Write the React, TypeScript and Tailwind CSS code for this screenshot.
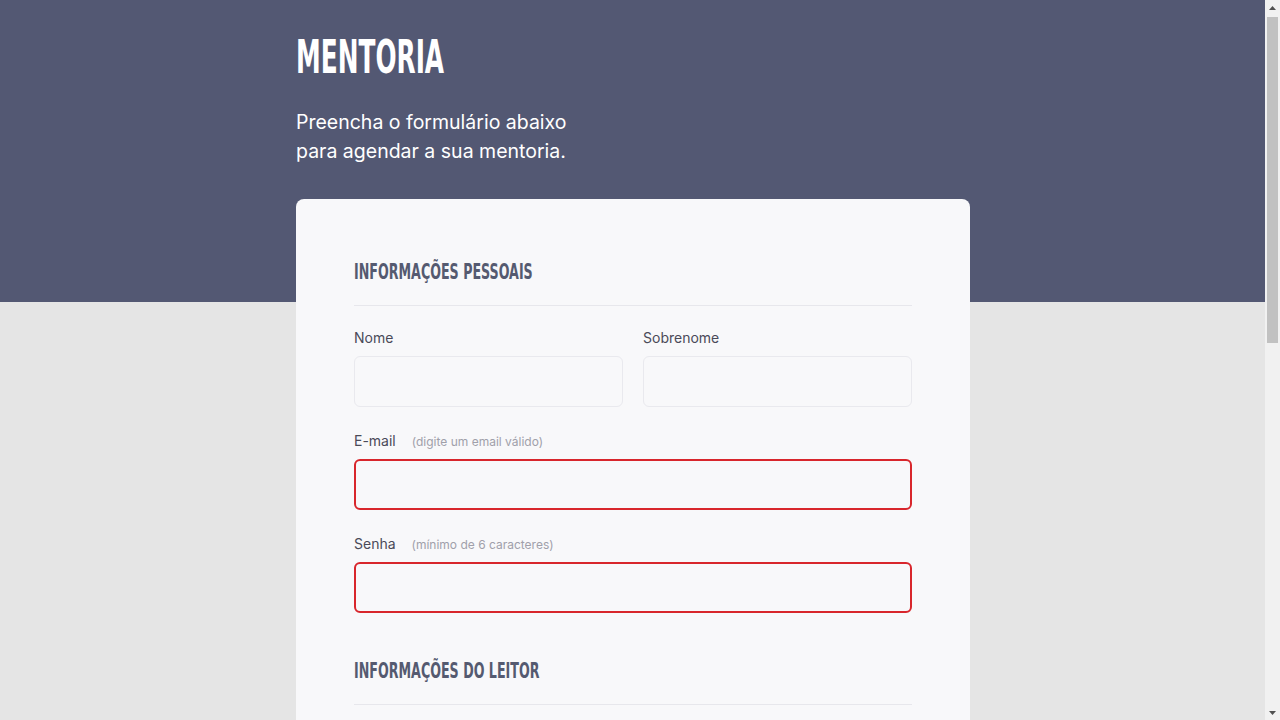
import React from "react";

const condensed = { fontFamily: '"Liberation Sans Narrow","DejaVu Sans Condensed","Liberation Sans",sans-serif' };
const body = { fontFamily: 'Inter,"Open Sans",sans-serif' };

function SectionTitle({ children }: { children: React.ReactNode }) {
  return (
    <div className="border-b border-[#e7e7ec] pb-[18px]">
      <h2
        style={condensed}
        className="inline-block origin-left scale-x-[0.64] text-[22px] font-bold uppercase leading-[30px] text-[#555a70] whitespace-nowrap"
      >
        {children}
      </h2>
    </div>
  );
}

function Field({ label, hint, error }: { label: string; hint?: string; error?: boolean }) {
  return (
    <div className="flex flex-col">
      <div className="flex items-baseline gap-[16px] h-[20px]">
        <span className="text-[14px] text-[#4a4a58]">{label}</span>
        {hint && <span className="text-[12px] text-[#a0a0aa]">{hint}</span>}
      </div>
      <div
        className={
          "mt-[9px] h-[51px] rounded-[6px] bg-[#f8f8fa] " +
          (error ? "border-2 border-[#d8262c]" : "border border-[#e9e9ee]")
        }
      />
    </div>
  );
}

function FakeScrollbar() {
  return (
    <div className="fixed right-0 top-0 z-10 flex h-screen w-[15px] flex-col bg-[#f1f1f1]">
      <div className="flex h-[15px] items-center justify-center">
        <svg width="7" height="4" viewBox="0 0 7 4"><path d="M0 4 L3.5 0 L7 4 Z" fill="#505050" /></svg>
      </div>
      <div className="mx-[2px] mt-[2px] h-[326px] bg-[#c1c1c1]" />
      <div className="flex-1" />
      <div className="flex h-[15px] items-center justify-center">
        <svg width="7" height="4" viewBox="0 0 7 4"><path d="M0 0 L7 0 L3.5 4 Z" fill="#505050" /></svg>
      </div>
    </div>
  );
}

export default function App() {
  return (
    <div style={body} className="min-h-screen bg-[#e5e5e5]">
      <FakeScrollbar />
      <div className="mr-[15px]">
        <div className="h-[302px] bg-[#535873]">
          <div className="mx-auto w-[675px] pt-[31px] pl-[1px]">
            <h1
              style={condensed}
              className="inline-block origin-left scale-x-[0.6] text-[46px] font-bold uppercase leading-[52px] text-white"
            >
              Mentoria
            </h1>
            <p className="mt-[25px] text-[19.5px] leading-[29px] text-white">
              Preencha o formulário abaixo
              <br />
              para agendar a sua mentoria.
            </p>
          </div>
        </div>
        <div className="mx-auto -mt-[103px] w-[675px] pb-[50px] pl-[1px]">
          <div className="rounded-[8px] bg-[#f8f8fa] px-[58px] pt-[58px] pb-[60px]">
            <SectionTitle>Informações pessoais</SectionTitle>
            <div className="mt-[21px] grid grid-cols-2 gap-x-[20px]">
              <Field label="Nome" />
              <Field label="Sobrenome" />
            </div>
            <div className="mt-[23px]">
              <Field label="E-mail" hint="(digite um email válido)" error />
            </div>
            <div className="mt-[23px]">
              <Field label="Senha" hint="(mínimo de 6 caracteres)" error />
            </div>
            <div className="mt-[43px]">
              <SectionTitle>Informações do leitor</SectionTitle>
            </div>
            <div className="mt-[22px] grid grid-cols-2 gap-x-[20px]">
              <Field label="Livro favorito" />
              <Field label="Autor favorito" />
            </div>
            <div className="mt-[23px]">
              <Field label="Gênero preferido" />
            </div>
            <div className="mt-[23px]">
              <Field label="Quantos livros você lê por ano?" />
            </div>
            <div className="mt-[42px]">
              <SectionTitle>Sobre a mentoria</SectionTitle>
            </div>
            <div className="mt-[22px]">
              <Field label="O que você espera da mentoria?" />
            </div>
            <div className="mt-[23px]">
              <Field label="Como conheceu o projeto?" />
            </div>
            <button className="mt-[40px] h-[52px] w-full rounded-[6px] bg-[#535873] text-[16px] font-semibold text-white">
              Enviar formulário
            </button>
          </div>
        </div>
      </div>
    </div>
  );
}
